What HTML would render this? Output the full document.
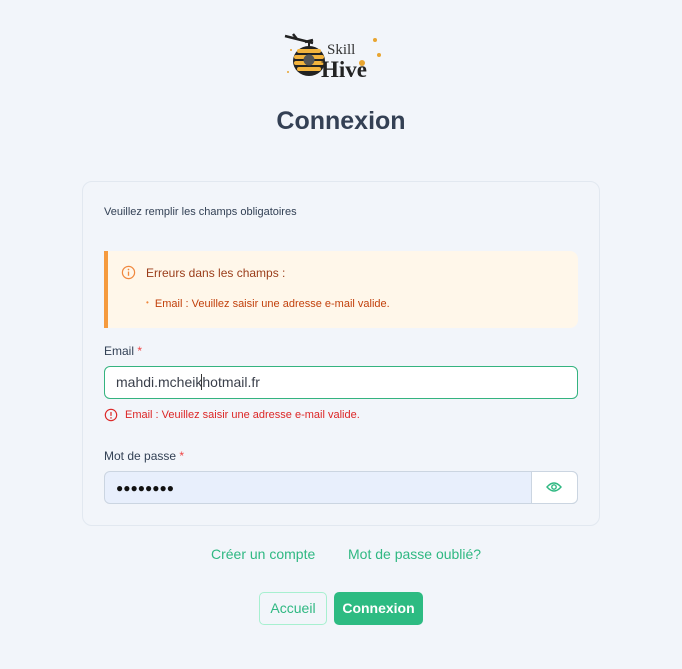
<!DOCTYPE html>
<html><head><meta charset="utf-8"><style>
*{box-sizing:border-box;margin:0;padding:0}
body{width:682px;height:669px;background:#f2f5fa;font-family:"Liberation Sans",sans-serif;color:#334155;position:relative;overflow:hidden}
.abs{position:absolute}
h1{position:absolute;left:0;width:682px;top:107px;text-align:center;font-size:25px;font-weight:bold;color:#344054}
.card{left:82px;top:181px;width:518px;height:345px;border:1px solid #e2e8f0;border-radius:10px;background:#f2f5fa}
.err{left:104px;top:251px;width:474px;height:77px;background:#fff7ea;border-left:4px solid #f59a3e;border-radius:0 8px 8px 0}
.inp{left:104px;width:474px;height:33px;border-radius:6px}
</style></head><body>
<svg class="abs" style="left:283px;top:30px" width="100" height="50" viewBox="0 0 100 50">
<path d="M2 6 L30 13 M10 4 L14 9 M22 12 L30 10" stroke="#222" stroke-width="2.5" fill="none"/>
<line x1="26" y1="12" x2="26" y2="17" stroke="#222" stroke-width="2"/>
<ellipse cx="26" cy="31" rx="16" ry="15" fill="#222"/>
<rect x="14" y="19" width="24" height="4" rx="2" fill="#f2b33d"/>
<rect x="11" y="25" width="30" height="4" rx="2" fill="#f2b33d"/>
<rect x="11" y="31" width="30" height="4" rx="2" fill="#f2b33d"/>
<rect x="14" y="37" width="24" height="4" rx="2" fill="#f2b33d"/>
<circle cx="26" cy="30" r="5.5" fill="#555"/>
<circle cx="79" cy="33" r="3" fill="#e8a531"/><circle cx="92" cy="10" r="2" fill="#e8a531"/><circle cx="96" cy="25" r="2" fill="#e8a531"/><circle cx="8" cy="20" r="1" fill="#e8a531"/><circle cx="5" cy="42" r="1" fill="#e8a531"/>
<text x="44" y="24" font-family="Liberation Serif" font-size="15" fill="#333">Skill</text>
<text x="38" y="47" font-family="Liberation Serif" font-size="23" font-weight="bold" fill="#222">Hive</text>
</svg>
<h1>Connexion</h1>
<div class="abs card"></div>
<div class="abs" style="left:104px;top:206px;font-size:11px;color:#334155">Veuillez remplir les champs obligatoires</div>
<div class="abs err"></div>
<svg class="abs" style="left:121px;top:265px" width="15" height="15" viewBox="0 0 16 16"><circle cx="8" cy="8" r="6.5" fill="none" stroke="#f0883e" stroke-width="1.3"/><line x1="8" y1="7" x2="8" y2="11.5" stroke="#f0883e" stroke-width="1.4"/><circle cx="8" cy="4.8" r=".9" fill="#f0883e"/></svg>
<div class="abs" style="left:146px;top:266px;font-size:12px;color:#9a3d1a">Erreurs dans les champs :</div>
<div class="abs" style="left:146px;top:298px;font-size:11px;color:#c2410c"><span style="color:#f0883e;font-size:8px;vertical-align:2px">•</span>&nbsp; Email : Veuillez saisir une adresse e-mail valide.</div>
<div class="abs" style="left:104px;top:344px;font-size:12px;color:#334155">Email <span style="color:#ef4444">*</span></div>
<div class="abs inp" style="top:366px;background:#fff;border:1px solid #34b37f;padding:7px 11px;font-size:14px;color:#3a3f4a">mahdi.mcheik<span style="border-left:1px solid #333;margin-left:-1px"></span>hotmail.fr</div>
<svg class="abs" style="left:104px;top:408px" width="14" height="14" viewBox="0 0 16 16"><circle cx="8" cy="8" r="6.5" fill="none" stroke="#dc2626" stroke-width="1.3"/><line x1="8" y1="4.5" x2="8" y2="9" stroke="#dc2626" stroke-width="1.4"/><circle cx="8" cy="11.3" r=".9" fill="#dc2626"/></svg>
<div class="abs" style="left:125px;top:409px;font-size:11px;color:#dc2626">Email : Veuillez saisir une adresse e-mail valide.</div>
<div class="abs" style="left:104px;top:449px;font-size:12px;color:#334155">Mot de passe <span style="color:#ef4444">*</span></div>
<div class="abs inp" style="top:471px;background:#e8effc;border:1px solid #cbd5e1;padding:9px 11px;font-size:12px;color:#111;letter-spacing:0px">●●●●●●●●</div>
<div class="abs" style="left:531px;top:471px;width:47px;height:33px;background:#fff;border:1px solid #cbd5e1;border-radius:0 6px 6px 0"></div>
<svg class="abs" style="left:546px;top:480px" width="16" height="14" viewBox="0 0 16 14"><path d="M1 7 Q8 -1 15 7 Q8 15 1 7Z" fill="none" stroke="#2fb882" stroke-width="1.4"/><circle cx="8" cy="7" r="2.2" fill="none" stroke="#2fb882" stroke-width="1.4"/></svg>
<div class="abs" style="left:211px;top:546px;font-size:14px;color:#2fb882">Créer un compte</div>
<div class="abs" style="left:348px;top:546px;font-size:14px;color:#2fb882">Mot de passe oublié?</div>
<div class="abs" style="left:259px;top:592px;width:68px;height:33px;border:1px solid #a7f0d0;border-radius:5px;color:#2fb882;font-size:14px;text-align:center;line-height:31px">Accueil</div>
<div class="abs" style="left:334px;top:592px;width:89px;height:33px;background:#2dbb82;border-radius:5px;color:#fff;font-size:14px;font-weight:bold;text-align:center;line-height:33px">Connexion</div>
</body></html>
